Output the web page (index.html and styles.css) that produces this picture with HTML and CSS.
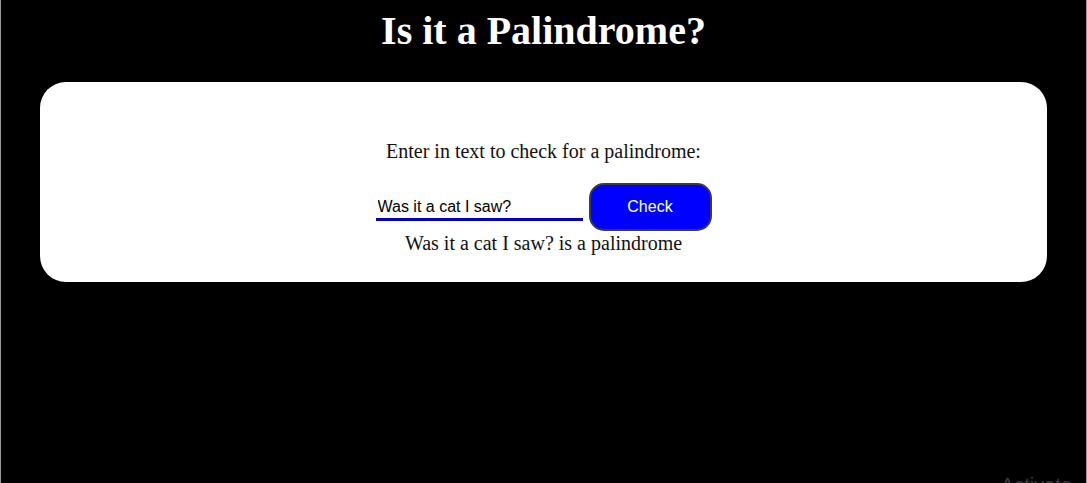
FILE: index.html
```html
<!DOCTYPE html>
<html lang="en">
<head>
<meta charset="utf-8">
<title>Is it a Palindrome?</title>
<link rel="stylesheet" href="styles.css">
</head>
<body>
<div class="page">
  <h1 class="title">Is it a Palindrome?</h1>
  <main class="card">
    <p class="prompt">Enter in text to check for a palindrome:</p>
    <div class="controls">
      <input class="text-input" type="text" value="Was it a cat I saw?">
      <button class="check-btn" type="button">Check</button>
    </div>
    <p class="result">Was it a cat I saw? is a palindrome</p>
  </main>
  <div class="watermark">Activate</div>
</div>
</body>
</html>
```
FILE: styles.css
```css
html, body {
  margin: 0;
  padding: 0;
  background: #000;
  height: 100%;
}
body {
  font-family: "Liberation Serif", "Times New Roman", serif;
  overflow: hidden;
}
.page {
  position: relative;
  height: 100%;
  box-sizing: border-box;
  border-left: 1px solid #9a9a9a;
  border-right: 1px solid #9a9a9a;
  padding: 0 39px;
}
.title {
  margin: 0;
  padding-top: 8px;
  color: #fff;
  text-align: center;
  font-size: 40px;
  font-weight: bold;
  line-height: 46px;
}
.card {
  margin-top: 28px;
  background: #fff;
  border-radius: 26px;
  height: 200px;
  box-sizing: border-box;
  padding-top: 57px;
  display: flex;
  flex-direction: column;
  align-items: center;
}
.prompt {
  margin: 0;
  font-size: 20px;
  line-height: 24px;
  color: #111;
}
.controls {
  margin-top: 20px;
  display: flex;
  align-items: center;
  gap: 6px;
}
.text-input {
  width: 207px;
  box-sizing: border-box;
  border: none;
  border-bottom: 3px solid #0000c8;
  padding: 4px 2px 2px 2px;
  font-family: "Liberation Sans", Arial, sans-serif;
  font-size: 16px;
  color: #000;
  background: transparent;
  outline: none;
  margin-top: 1px;
}
.check-btn {
  width: 123px;
  height: 48px;
  background: #0000ff;
  color: #fff;
  border: 2px solid #3a3a4a;
  border-radius: 15px;
  font-family: "Liberation Sans", Arial, sans-serif;
  font-size: 16px;
  padding: 0;
}
.result {
  margin: 0;
  font-size: 20px;
  line-height: 24px;
  color: #111;
}
.watermark {
  position: absolute;
  right: 14px;
  bottom: -14px;
  color: #3a3a3a;
  font-family: "Liberation Sans", Arial, sans-serif;
  font-size: 20px;
}
```
